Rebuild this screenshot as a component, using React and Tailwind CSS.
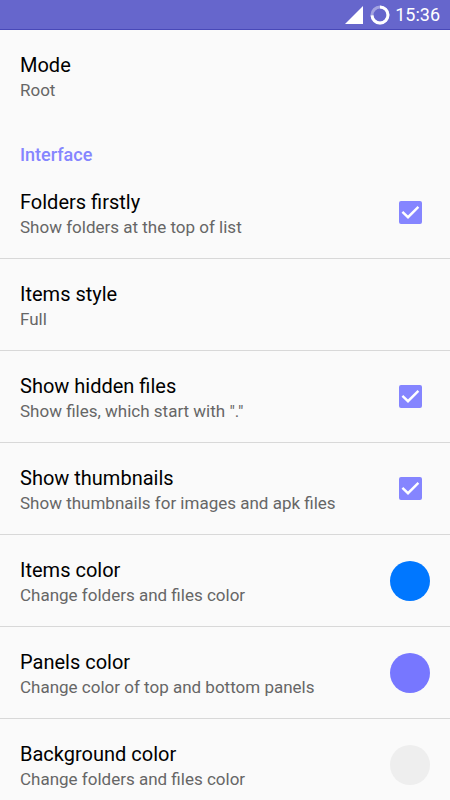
import React, { useState } from "react";

function Labels({ title, summary, id }) {
  return (
    <span className="flex min-w-0 flex-1 flex-col">
      <span id={id} className="text-[20px] leading-[26px] text-black">{title}</span>
      <span className="text-[17px] leading-6 text-[#666666]">{summary}</span>
    </span>
  );
}

function LinkRow({ title, summary, divider = true }) {
  return (
    <button
      type="button"
      className={
        "flex w-full items-center border-b px-5 pt-[22px] pb-[19px] text-left " +
        (divider ? "border-[#d8d8d8]" : "border-transparent")
      }
    >
      <Labels title={title} summary={summary} />
    </button>
  );
}

function CheckRow({ title, summary }) {
  const [on, setOn] = useState(true);
  return (
    <label className="flex items-center border-b border-[#d8d8d8] px-5 pt-[22px] pb-[19px]">
      <Labels title={title} summary={summary} />
      <span className="-mt-1 grid w-10 place-items-center">
        <input
          type="checkbox"
          checked={on}
          onChange={(e) => setOn(e.target.checked)}
          className="peer col-start-1 row-start-1 size-[23px] appearance-none rounded-xs border-2 border-[#8585ff] checked:bg-[#8585ff]"
        />
        <svg
          viewBox="0 0 23 23"
          className="pointer-events-none invisible col-start-1 row-start-1 size-[23px] peer-checked:visible"
          fill="none"
          stroke="white"
          strokeWidth="2.4"
          aria-hidden="true"
        >
          <path d="M3.4 10.8 L9 16.2 L19.4 5.8" />
        </svg>
      </span>
    </label>
  );
}

function ColorRow({ id, title, summary, swatch }) {
  return (
    <div className="flex items-center border-b border-[#d8d8d8] px-5 pt-[22px] pb-[19px]">
      <Labels id={id} title={title} summary={summary} />
      <button type="button" aria-labelledby={id} className={"-mt-[3px] size-10 rounded-full " + swatch} />
    </div>
  );
}

function StatusBar() {
  return (
    <header className="flex h-[30px] shrink-0 items-center justify-end border-b border-[#4848b8] bg-[#6666cc] pt-px pr-[10px] text-white">
      <svg className="mr-[7px] size-[18px]" viewBox="0 0 18 18" fill="white" aria-hidden="true">
        <path d="M18 0 V18 H0 Z" />
      </svg>
      <svg className="mr-[5px] size-5" viewBox="0 0 20 20" fill="none" strokeWidth="3" aria-hidden="true">
        <circle cx="10" cy="10" r="8" stroke="white" strokeOpacity="0.4" />
        <path d="M10 2 A8 8 0 1 1 2 10.4" stroke="white" />
      </svg>
      <time className="text-[18px] leading-6">15:36</time>
    </header>
  );
}

export default function App() {
  return (
    <div className="flex h-screen flex-col bg-[#fafafa] font-['Roboto',sans-serif]">
      <StatusBar />
      <main className="min-h-0 flex-1 overflow-y-auto [scrollbar-width:none]">
        <LinkRow title="Mode" summary="Root" divider={false} />
        <h2 className="px-5 pt-[21px] text-[18px] leading-6 font-medium text-[#8585ff]">Interface</h2>
        <CheckRow title="Folders firstly" summary="Show folders at the top of list" />
        <LinkRow title="Items style" summary="Full" />
        <CheckRow title="Show hidden files" summary={'Show files, which start with "."'} />
        <CheckRow title="Show thumbnails" summary="Show thumbnails for images and apk files" />
        <ColorRow id="items-color" title="Items color" summary="Change folders and files color" swatch="bg-[#0077ff]" />
        <ColorRow id="panels-color" title="Panels color" summary="Change color of top and bottom panels" swatch="bg-[#7777ff]" />
        <ColorRow id="background-color" title="Background color" summary="Change folders and files color" swatch="bg-[#eeeeee]" />
      </main>
    </div>
  );
}
